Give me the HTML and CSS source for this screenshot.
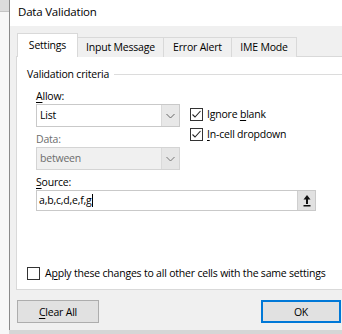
FILE: index.html
```html
<!DOCTYPE html>
<html lang="en">
<head>
  <meta charset="UTF-8" />
  <title>Data Validation</title>
  <link rel="stylesheet" href="styles.css">
</head>
<body>
  <div class="side"><div class="side-top"></div></div>

  <div class="window">
    <div class="titlebar">Data Validation</div>

    <div class="content">
      <div class="tabs">
        <div class="tab active">Settings</div>
        <div class="tab w-input">Input Message</div>
        <div class="tab w-error">Error Alert</div>
        <div class="tab w-ime">IME Mode</div>
      </div>

      <div class="panel">
        <div class="group-title"><span>Validation criteria</span></div>

        <div class="criteria">
          <div class="fields">
            <div class="label"><u>A</u>llow:</div>
            <div class="combo">
              <span class="combo-text">List</span>
              <span class="combo-btn">
                <svg width="9" height="6" viewBox="0 0 9 6"><polyline points="0.5,1 4.5,5 8.5,1" fill="none" stroke="#666" stroke-width="1"/></svg>
              </span>
            </div>

            <div class="label disabled">Data:</div>
            <div class="combo is-disabled">
              <span class="combo-text">between</span>
              <span class="combo-btn">
                <svg width="9" height="6" viewBox="0 0 9 6"><polyline points="0.5,1 4.5,5 8.5,1" fill="none" stroke="#777" stroke-width="1"/></svg>
              </span>
            </div>
          </div>

          <div class="checks">
            <label class="check">
              <span class="box"><svg width="11" height="11" viewBox="0 0 11 11"><polyline points="1.5,5.5 4,8 9.5,2" fill="none" stroke="#222" stroke-width="1.1"/></svg></span>
              <span>Ignore <u>b</u>lank</span>
            </label>
            <label class="check">
              <span class="box"><svg width="11" height="11" viewBox="0 0 11 11"><polyline points="1.5,5.5 4,8 9.5,2" fill="none" stroke="#222" stroke-width="1.1"/></svg></span>
              <span><u>I</u>n-cell dropdown</span>
            </label>
          </div>
        </div>

        <div class="label source-label"><u>S</u>ource:</div>
        <div class="source">
          <span class="source-text">a,b,c,d,e,f,g<span class="caret"></span></span>
          <span class="ref-btn">
            <svg width="8" height="12" viewBox="0 0 8 12">
              <polygon points="4,0 0.5,4.5 7.5,4.5" fill="#111"/>
              <rect x="3" y="4" width="2" height="5" fill="#111"/>
              <rect x="0.5" y="10" width="7" height="1.5" fill="#111"/>
            </svg>
          </span>
        </div>

        <label class="check apply">
          <span class="box"></span>
          <span>A<u>p</u>ply these changes to all other cells with the same settings</span>
        </label>
      </div>

      <div class="buttons">
        <button class="btn"><u>C</u>lear All</button>
        <button class="btn default">OK</button>
      </div>
    </div>
  </div>
</body>
</html>
```

FILE: styles.css
```css
* {
  box-sizing: border-box;
}

body {
  margin: 0;
  width: 342px;
  height: 334px;
  overflow: hidden;
  display: flex;
  background: #d6d6d6;
  font-family: "Open Sans", "Noto Sans", sans-serif;
  font-size: 10.5px;
  letter-spacing: -0.2px;
  color: #000;
}

u {
  text-decoration-thickness: 1px;
  text-underline-offset: 2px;
}

.side {
  width: 9px;
  flex-shrink: 0;
  background: #f7f7f7;
}

.side-top {
  height: 12px;
  background: #dcdcdc;
  border-bottom: 1px solid #c4c4c4;
}

.window {
  width: 360px;
  height: 330px;
  flex-shrink: 0;
  background: #f0f0f0;
  border-left: 1px solid #8a8a8a;
}

.titlebar {
  height: 26px;
  background: #fff;
  padding: 4px 0 0 8px;
  font-size: 11.5px;
  line-height: 16px;
}

.content {
  padding: 7px 0 0 6px;
}

.tabs {
  display: flex;
  align-items: flex-end;
  height: 24px;
  margin-left: 1px;
  position: relative;
  z-index: 1;
}

.tab {
  height: 20px;
  line-height: 19px;
  text-align: center;
  background: #f0f0f0;
  border: 1px solid #d9d9d9;
  border-bottom: none;
  margin-left: -1px;
}

.tab.active {
  width: 61px;
  height: 24px;
  line-height: 22px;
  background: #fff;
  margin-left: 0;
}

.w-input { width: 87px; }
.w-error { width: 69px; }
.w-ime { width: 66px; }

.panel {
  height: 234px;
  margin-top: -1px;
  background: #fff;
  border: 1px solid #d9d9d9;
  padding: 9px 0 0 10px;
}

.group-title {
  display: flex;
  align-items: center;
  line-height: 16px;
}

.group-title::after {
  content: "";
  flex: 1;
  height: 1px;
  background: #dcdcdc;
  margin-left: 5px;
}

.criteria {
  display: flex;
  padding-left: 9px;
  margin-top: 6px;
}

.fields {
  width: 144px;
}

.label {
  line-height: 16px;
}

.label.disabled {
  color: #6d6d6d;
  margin-top: 4px;
}

.combo {
  display: flex;
  height: 23px;
  border: 1px solid #c9c9c9;
  background: #fff;
}

.combo-text {
  flex: 1;
  padding-left: 3px;
  line-height: 21px;
}

.combo-btn {
  width: 18px;
  display: flex;
  align-items: center;
  justify-content: center;
  background: #e8e8e8;
  border-left: 1px solid #dadada;
}

.combo.is-disabled {
  background: #f0f0f0;
  border-color: #d4d4d4;
  color: #6d6d6d;
}

.combo.is-disabled .combo-btn {
  background: #e6e6e6;
}

.checks {
  display: flex;
  flex-direction: column;
  gap: 4px;
  margin: 18px 0 0 10px;
}

.check {
  display: flex;
  align-items: center;
  gap: 4px;
  line-height: 16px;
}

.box {
  width: 13px;
  height: 13px;
  flex-shrink: 0;
  border: 1px solid #333;
  background: #fff;
  display: flex;
  align-items: center;
  justify-content: center;
}

.source-label {
  margin: 4px 0 0 9px;
}

.source {
  display: flex;
  width: 280px;
  height: 21px;
  margin-left: 9px;
  border: 1px solid #c9c9c9;
}

.source-text {
  flex: 1;
  padding-left: 2px;
  line-height: 19px;
  display: flex;
  align-items: center;
}

.caret {
  width: 1px;
  height: 13px;
  background: #000;
}

.ref-btn {
  width: 18px;
  display: flex;
  align-items: center;
  justify-content: center;
  background: #e1e1e1;
  border-left: 1px solid #cfcfcf;
}

.check.apply {
  margin-top: 54px;
  gap: 5px;
}

.buttons {
  display: flex;
  gap: 162px;
  padding: 10px 0 0 1px;
}

.btn {
  height: 23px;
  font-family: inherit;
  font-size: 10.5px;
  letter-spacing: -0.2px;
  color: #000;
  background: #e1e1e1;
  border: 1px solid #adadad;
  padding: 0;
}

.btn:first-child {
  width: 82px;
}

.btn.default {
  width: 80px;
  border: 1px solid #0078d7;
  box-shadow: inset 0 0 0 1px #0078d7;
}
```
